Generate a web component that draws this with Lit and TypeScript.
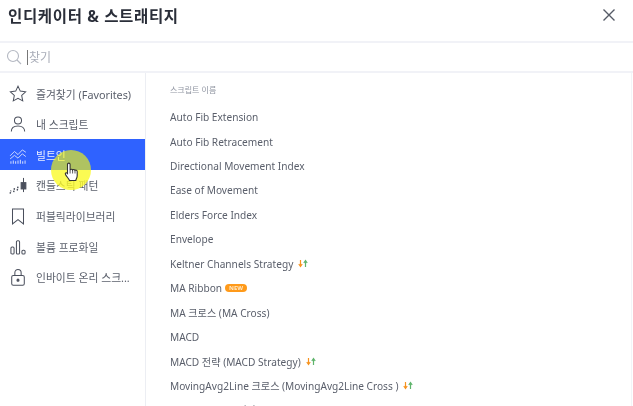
import { LitElement, html, css, svg } from "lit";
import { customElement } from "lit/decorators.js";

const side = [
  { label: "즐겨찾기 (Favorites)", icon: svg`<path d="M14 4l2.900 6.300 6.800.9-5 4.700 1.300 6.800-6-3.300-6 3.300 1.300-6.800-5-4.700 6.800-.9z"/>` },
  { label: "내 스크립트", icon: svg`<circle cx="14" cy="9.500" r="4.500"/><path d="M5.500 23.500c0-4.500 3.500-7 8.500-7s8.500 2.500 8.500 7"/>` },
  { label: "빌트인", active: true, icon: svg`<path d="M4 15l5.500-5.500 4.500 4 5.500-6L24 10.500M4 19l5.500-4.500 4.500 3.500 5.500-5.500 4.500 3.500" stroke-width="1.200"/><path d="M5 25v-3M8 25v-4M11 25v-3M14 25v-4M17 25v-5M20 25v-3M23 25v-4" stroke-width="1.300"/>` },
  { label: "캔들스틱 패턴", icon: svg`<path d="M4 25l1-4M8.500 23l1-5M13 21l1-5" stroke-width="1.800" stroke-dasharray="2 1"/><rect x="18" y="11" width="6" height="8" fill="currentColor"/><path d="M21 5v18"/>` },
  { label: "퍼블릭라이브러리", icon: svg`<path d="M7 5h14v19l-7-5.500L7 24z"/>` },
  { label: "볼륨 프로화일", icon: svg`<rect x="5" y="14" width="4" height="9" rx="1.500"/><rect x="12" y="6" width="4" height="17" rx="1.500"/><rect x="19" y="18" width="4" height="5" rx="1.500"/>` },
  { label: "인바이트 온리 스크...", icon: svg`<rect x="6" y="12" width="16" height="12.500" rx="2"/><path d="M10 12V8.500a4 4 0 0 1 8 0V12"/><circle cx="14" cy="18" r="1.300" fill="currentColor"/>` },
];

const rows: { t: string; arrows?: boolean; isNew?: boolean }[] = [
  { t: "Auto Fib Extension" },
  { t: "Auto Fib Retracement" },
  { t: "Directional Movement Index" },
  { t: "Ease of Movement" },
  { t: "Elders Force Index" },
  { t: "Envelope" },
  { t: "Keltner Channels Strategy", arrows: true },
  { t: "MA Ribbon", isNew: true },
  { t: "MA 크로스 (MA Cross)" },
  { t: "MACD" },
  { t: "MACD 전략 (MACD Strategy)", arrows: true },
  { t: "MovingAvg2Line 크로스 (MovingAvg2Line Cross )", arrows: true },
  { t: "Parabolic SAR 전략 (SAR Strategy)" },
];

@customElement("app-root")
export class AppRoot extends LitElement {
  static styles = css`
    :host {
      display: block;
      width: 633px;
      height: 406px;
      overflow: hidden;
      position: relative;
      background: #fff;
      color: #4a4f5c;
      font-family: "Noto Sans", "Noto Sans CJK KR", sans-serif;
    }
    .soft { filter: blur(0.5px); height: 100%; display: flex; flex-direction: column; }
    header {
      height: 41px;
      flex: none;
      box-sizing: border-box;
      display: flex;
      align-items: center;
      justify-content: space-between;
      padding: 0 16px 11px 8px;
    }
    h1 { margin: 0; font-size: 15.500px; font-weight: 700; color: #2a2e39; letter-spacing: 0.65px; white-space: nowrap; }
    .close { width: 16px; height: 16px; color: #555a66; display: block; }
    .search {
      height: 32px;
      flex: none;
      box-sizing: border-box;
      border-top: 2px solid #f1f2f7;
      border-bottom: 2px solid #f1f2f7;
      display: flex;
      align-items: center;
      padding-left: 6px;
      gap: 5px;
      font-size: 12px;
      color: #a9adb8;
    }
    .search svg { width: 16px; height: 16px; color: #b4b8c2; }
    .caret { width: 1px; height: 15px; background: #777; margin-right: 1px; }
    .search span { display: flex; align-items: center; }
    .body { flex: 1; display: flex; min-height: 0; margin-right: 1px; border-right: 1px solid #f3f4f8; }
    nav {
      width: 145px;
      flex: none;
      border-right: 1px solid #eceef3;
      padding-top: 5.300px;
    }
    .item {
      height: 30.600px;
      display: flex;
      align-items: center;
      padding-left: 7px;
      gap: 7px;
      font-size: 10.800px;
      white-space: nowrap;
      color: #5a5f6b;
    }
    .item svg { width: 22px; height: 22px; flex: none; fill: none; stroke: currentColor; stroke-width: 1.300; color: #4a4f5c; }
    .item.active { background: #2f62ff; color: #e8edff; }
    .item.active svg { color: #cfdbff; }
    main { flex: 1; padding: 11px 0 0 24px; overflow: hidden; }
    .head { font-size: 8px; color: #8f94a1; height: 16px; line-height: 11px; margin-bottom: 5px; }
    .row {
      height: 24.400px;
      display: flex;
      align-items: center;
      gap: 5px;
      font-size: 10.150px;
      color: #5a5f6b;
      white-space: nowrap;
    }
    .arrows { display: inline-flex; }
    .arrows svg { width: 5px; height: 9px; }
    .dn { color: #f7931e; }
    .up { color: #5fb46c; }
    .new {
      background: #ff9a1a;
      color: #ffe9c8;
      font-size: 6px;
      font-weight: 700;
      line-height: 8px;
      height: 8px;
      padding: 0 4px;
      border-radius: 4px;
      margin-left: -2px;
    }
    .spot {
      position: absolute;
      left: 51px;
      top: 150px;
      width: 40px;
      height: 40px;
      border-radius: 50%;
      background: linear-gradient(to bottom, rgba(255, 255, 0, 0.62) 20px, rgba(250, 250, 40, 0.8) 20px);
      filter: blur(0.5px);
    }
    .hand { position: absolute; left: 64px; top: 162px; width: 15px; height: 20px; filter: blur(0.4px); }
  `;

  arrows() {
    return html`<span class="arrows">
      <svg class="dn" viewBox="0 0 5 9"><path d="M2.500 1v6M.8 5l1.700 2.500L4.200 5" fill="none" stroke="currentColor" stroke-width="1.200"/></svg>
      <svg class="up" viewBox="0 0 5 9"><path d="M2.500 8V2M.8 4l1.700-2.500L4.200 4" fill="none" stroke="currentColor" stroke-width="1.200"/></svg>
    </span>`;
  }

  render() {
    return html`
      <div class="soft">
        <header>
          <h1>인디케이터 &amp; 스트래티지</h1>
          <svg class="close" viewBox="0 0 16 16"><path d="M2.500 2.500l11 11M13.500 2.500l-11 11" stroke="currentColor" stroke-width="1.400" fill="none"/></svg>
        </header>
        <div class="search">
          <svg viewBox="0 0 16 16" fill="none" stroke="currentColor" stroke-width="1.100"><circle cx="7" cy="7" r="5.500"/><path d="M11 11l4 4"/></svg>
          <span><i class="caret"></i>찾기</span>
        </div>
        <div class="body">
          <nav>
            ${side.map(
              (s) => html`<div class="item ${s.active ? "active" : ""}">
                <svg viewBox="0 0 28 28">${s.icon}</svg><span>${s.label}</span>
              </div>`
            )}
          </nav>
          <main>
            <div class="head">스크립트 이름</div>
            ${rows.map(
              (r) => html`<div class="row">
                <span>${r.t}</span>
                ${r.arrows ? this.arrows() : ""}
                ${r.isNew ? html`<span class="new">NEW</span>` : ""}
              </div>`
            )}
          </main>
        </div>
      </div>
      <div class="spot"></div>
      <svg class="hand" viewBox="0 0 15 20">
        <path d="M3.500 2.500c0-1.800 2.600-1.800 2.600 0V8c.4-1 2.300-1 2.500 0 .5-.8 2.200-.7 2.400.4.700-.500 2.200-.2 2.200 1.100v4c0 2.500-1 3-1.400 5H5.500C4.800 16.500 2.800 15 1.500 12.500.8 11.200 2 10 3.500 11.500z" fill="#fff" stroke="#333" stroke-width="1.100"/>
        <path d="M6.100 8v3.500M8.600 8v3.500M11 8.500v3" stroke="#333" stroke-width=".8" fill="none"/>
      </svg>
    `;
  }
}
